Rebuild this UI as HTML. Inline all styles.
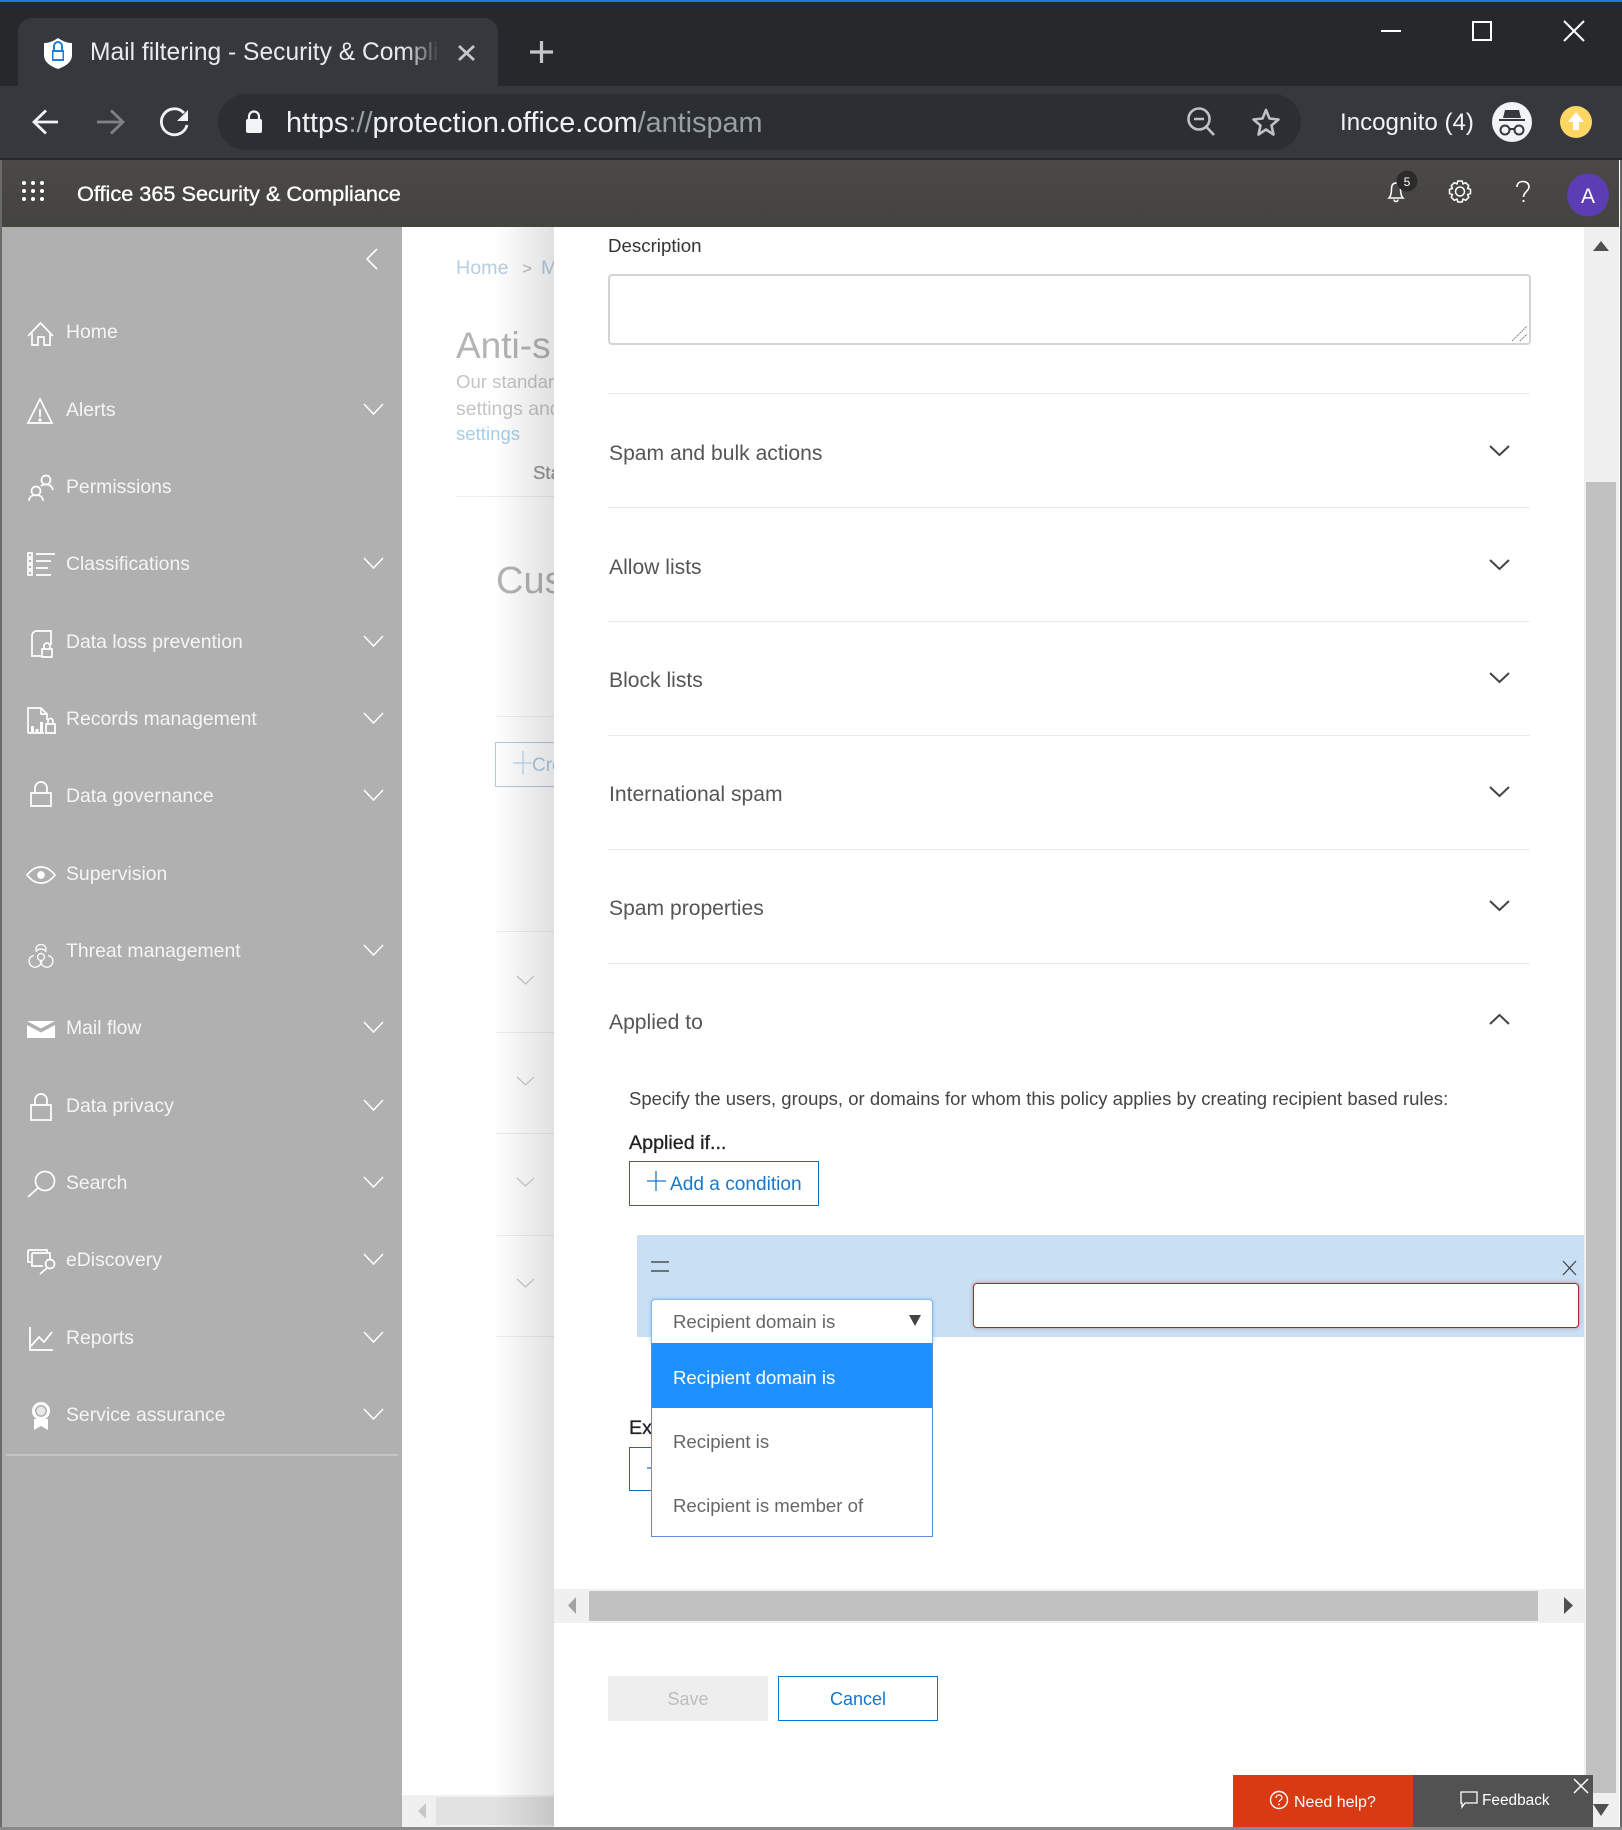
<!DOCTYPE html>
<html><head><meta charset="utf-8"><title>Mail filtering - Security &amp; Compliance</title>
<style>
html,body{margin:0;padding:0;width:1622px;height:1830px;overflow:hidden;background:#fff;font-family:"Liberation Sans",sans-serif}
div{position:absolute;box-sizing:border-box}
.t{position:absolute;white-space:nowrap;line-height:30px;height:30px}
.s{color:#f5f5f5;font-size:19.4px;left:66px}
.h{color:#555;font-size:21.1px;left:609px}
.l{left:608px;width:922px;height:1px;background:#ebebeb}
.b{left:496px;width:58px;height:1px;background:#ececec}
.o{color:#666;font-size:18.6px;left:673px}
</style></head><body>
<div style="left:0;top:0;width:1622px;height:1830px;overflow:hidden">
<!-- browser chrome -->
<div style="left:0;top:0;width:1622px;height:86px;background:#26282c"></div>
<div style="left:0;top:0;width:1622px;height:2px;background:#1d7ed0"></div>
<div style="left:18px;top:18px;width:480px;height:68px;background:#35393d;border-radius:14px 14px 0 0"></div>
<div class="t" style="left:90px;top:38px;width:350px;overflow:hidden;color:#e8eaed;font-size:24.6px;-webkit-mask-image:linear-gradient(90deg,#000 90%,transparent)">Mail filtering - Security &amp; Compliance</div>
<div style="left:0;top:86px;width:1622px;height:72px;background:#35393d"></div>
<div style="left:0;top:158px;width:1622px;height:2px;background:#26282c"></div>
<div style="left:218px;top:94px;width:1083px;height:56px;background:#2b2f33;border-radius:28px"></div>
<div class="t" style="left:286px;top:108px;font-size:28.8px;color:#f0f1f2"><span style="color:#f0f1f2">https</span><span style="color:#9aa0a6">://</span>protection.office.com<span style="color:#9aa0a6">/antispam</span></div>
<div class="t" style="left:1340px;top:108px;font-size:24.1px;color:#f1f3f4">Incognito (4)</div>
<!-- O365 header -->
<div style="left:0;top:160px;width:1622px;height:67px;background:linear-gradient(#4a4947,#444340)"></div>
<div class="t" style="left:77px;top:179px;font-size:21.7px;color:#fff;-webkit-text-stroke:.35px #fff">Office 365 Security &amp; Compliance</div>
<div class="t" style="left:1400px;top:167px;width:14px;text-align:center;font-size:12px;color:#fff;z-index:5">5</div>
<div class="t" style="left:1568px;top:182px;width:40px;text-align:center;font-size:21px;color:#fff;z-index:5">A</div>
<!-- sidebar -->
<div style="left:2px;top:227px;width:400px;height:1600px;background:#b0b0b0"></div>
<div style="left:6px;top:1454px;width:392px;height:2px;background:#c4c4c4"></div>
<div class="t s" style="top:317px">Home</div>
<div class="t s" style="top:395px">Alerts</div>
<div class="t s" style="top:472px">Permissions</div>
<div class="t s" style="top:549px">Classifications</div>
<div class="t s" style="top:627px">Data loss prevention</div>
<div class="t s" style="top:704px">Records management</div>
<div class="t s" style="top:781px">Data governance</div>
<div class="t s" style="top:859px">Supervision</div>
<div class="t s" style="top:936px">Threat management</div>
<div class="t s" style="top:1013px">Mail flow</div>
<div class="t s" style="top:1091px">Data privacy</div>
<div class="t s" style="top:1168px">Search</div>
<div class="t s" style="top:1245px">eDiscovery</div>
<div class="t s" style="top:1323px">Reports</div>
<div class="t s" style="top:1400px">Service assurance</div>
<!-- background page -->
<div style="left:402px;top:227px;width:152px;height:1600px;background:#fff"></div>
<div class="t" style="left:456px;top:253px;font-size:19.7px;color:#b9cde0">Home</div>
<div class="t" style="left:522px;top:254px;font-size:17px;color:#bbb">&gt;</div>
<div class="t" style="left:541px;top:253px;font-size:19.7px;color:#b9cde0">M</div>
<div class="t" style="left:456px;top:331px;font-size:37px;color:#b4b4b4">Anti-s</div>
<div class="t" style="left:456px;top:367px;font-size:18.6px;color:#c4c4c4">Our standard</div>
<div class="t" style="left:456px;top:394px;font-size:19.4px;color:#c4c4c4">settings and</div>
<div class="t" style="left:456px;top:419px;font-size:18.6px;color:#a5cfe9">settings</div>
<div class="t" style="left:533px;top:458px;font-size:18.6px;color:#999;-webkit-text-stroke:.3px #999">Sta</div>
<div class="b" style="left:456px;width:98px;top:496px"></div>
<div class="t" style="left:496px;top:566px;font-size:38px;color:#b4b4b4">Cus</div>
<div class="b" style="top:716px"></div>
<div style="left:495px;top:742px;width:70px;height:45px;border:1px solid #a9cbe8"></div>
<div class="t" style="left:532px;top:751px;font-size:19px;color:#a9cbe8">Cre</div>
<div class="b" style="top:931px"></div>
<div class="b" style="top:1032px"></div>
<div class="b" style="top:1133px"></div>
<div class="b" style="top:1235px"></div>
<div class="b" style="top:1336px"></div>
<div style="left:402px;top:1795px;width:152px;height:32px;background:#f0f0f0"></div>
<div style="left:436px;top:1797px;width:118px;height:28px;background:#e2e2e2"></div>
<div style="left:494px;top:227px;width:60px;height:1600px;background:linear-gradient(90deg,rgba(0,0,0,0),rgba(0,0,0,.12))"></div>
<!-- panel -->
<div style="left:554px;top:227px;width:1066px;height:1600px;background:#fff;overflow:hidden"></div>
<div class="t" style="left:608px;top:231px;font-size:18.7px;color:#333">Description</div>
<div style="left:608px;top:274px;width:923px;height:71px;border:2px solid #d4d4d4;border-radius:4px"></div>
<div class="l" style="top:393px"></div>
<div class="l" style="top:507px"></div>
<div class="l" style="top:621px"></div>
<div class="l" style="top:735px"></div>
<div class="l" style="top:849px"></div>
<div class="l" style="top:963px"></div>
<div class="t h" style="top:439px">Spam and bulk actions</div>
<div class="t h" style="top:553px">Allow lists</div>
<div class="t h" style="top:666px">Block lists</div>
<div class="t h" style="top:780px">International spam</div>
<div class="t h" style="top:894px">Spam properties</div>
<div class="t h" style="top:1008px">Applied to</div>
<div class="t" style="left:629px;top:1084px;font-size:18.53px;color:#444">Specify the users, groups, or domains for whom this policy applies by creating recipient based rules:</div>
<div class="t" style="left:629px;top:1128px;font-size:19.7px;color:#222;-webkit-text-stroke:.3px #222">Applied if...</div>
<div style="left:629px;top:1161px;width:190px;height:45px;border:1px solid #1a6cb8"></div>
<div class="t" style="left:670px;top:1170px;font-size:19.1px;color:#1a78cc">Add a condition</div>
<div style="left:637px;top:1235px;width:947px;height:102px;background:#c9e0f4"></div>
<div style="left:973px;top:1283px;width:606px;height:45px;background:#fff;border:1.5px solid #a4262c;border-radius:4px;box-shadow:0 0 4px rgba(164,38,44,.45)"></div>
<div class="t" style="left:629px;top:1413px;font-size:19.7px;color:#222;-webkit-text-stroke:.3px #222">Exc</div>
<div style="left:629px;top:1447px;width:40px;height:44px;border:1px solid #1a6cb8"></div>
<div style="left:651px;top:1299px;width:282px;height:45px;background:#fff;border:1px solid #8ab8e8;border-radius:4px 4px 0 0;box-shadow:0 0 4px rgba(100,170,240,.6)"></div>
<div class="t o" style="top:1307px">Recipient domain is</div>
<div style="left:651px;top:1343px;width:282px;height:194px;background:#fff;border:1px solid #5f8fd8"></div>
<div style="left:652px;top:1343px;width:280px;height:65px;background:#1e90ff"></div>
<div class="t o" style="top:1363px;color:#fff">Recipient domain is</div>
<div class="t o" style="top:1427px">Recipient is</div>
<div class="t o" style="top:1491px">Recipient is member of</div>
<!-- horizontal scrollbar -->
<div style="left:554px;top:1589px;width:1031px;height:34px;background:#f0f0f0"></div>
<div style="left:589px;top:1591px;width:949px;height:30px;background:#c1c1c1"></div>
<!-- buttons -->
<div style="left:608px;top:1676px;width:160px;height:45px;background:#eee"></div>
<div class="t" style="left:608px;top:1684px;width:160px;text-align:center;font-size:18px;color:#bdbdbd">Save</div>
<div style="left:778px;top:1676px;width:160px;height:45px;border:1.5px solid #0078d7"></div>
<div class="t" style="left:778px;top:1684px;width:160px;text-align:center;font-size:18px;color:#0f78d4">Cancel</div>
<!-- vertical scrollbar -->
<div style="left:1584px;top:227px;width:35px;height:1600px;background:#f0f0f0"></div>
<div style="left:1586px;top:482px;width:30px;height:1311px;background:#c1c1c1"></div>
<div style="left:1619px;top:160px;width:1px;height:1670px;background:#fff"></div>
<div style="left:1620px;top:160px;width:2px;height:1670px;background:#666"></div>
<div style="left:0;top:160px;width:2px;height:1670px;background:#6a6a6a"></div>
<div style="left:0;top:1827px;width:1622px;height:3px;background:#8a8a8a"></div>
<!-- help -->
<div style="left:1233px;top:1775px;width:180px;height:52px;background:#d83b13"></div>
<div class="t" style="left:1294px;top:1788px;font-size:16px;color:#fff">Need help?</div>
<div style="left:1413px;top:1775px;width:180px;height:52px;background:#525252"></div>
<div class="t" style="left:1482px;top:1786px;font-size:15.4px;color:#fff">Feedback</div>
<!-- icons overlay -->
<svg width="1622" height="1830" viewBox="0 0 1622 1830" style="position:absolute;left:0;top:0" fill="none">
<!-- favicon -->
<path d="M58 38C52 42 48 43 44 43V55C44 62 50 66 58 69C66 66 72 62 72 55V43C68 43 64 42 58 38Z" fill="#fff"/>
<path d="M52 50H64V61H52Z" fill="#1b7fd6"/><path d="M53.5 52H62.5V59H53.5Z" fill="#fff"/><path d="M54 50V46A4 4 0 0 1 62 46V50" stroke="#1b7fd6" stroke-width="2"/>
<!-- tab close/new -->
<path d="M459 46L474 60M474 46L459 60" stroke="#c4c7c9" stroke-width="2.800"/>
<path d="M541.5 41V63M530 52H553" stroke="#c4c7c9" stroke-width="3.2"/>
<!-- window -->
<path d="M1381 31H1401" stroke="#fff" stroke-width="2"/>
<rect x="1473" y="22" width="18" height="18" stroke="#fff" stroke-width="2"/>
<path d="M1564 21L1584 41M1584 21L1564 41" stroke="#fff" stroke-width="2"/>
<!-- nav -->
<path d="M58 122H35M46 110.500L34 122L46 133.500" stroke="#f1f3f4" stroke-width="2.800"/>
<path d="M97 122H122M111 110.500L123 122L111 133.500" stroke="#7e8286" stroke-width="2.800"/>
<path d="M184 113A13 13 0 1 0 187 125" stroke="#f1f3f4" stroke-width="2.800"/><path d="M188 110V121H177Z" fill="#f1f3f4"/>
<rect x="246" y="119" width="16" height="14" rx="2" fill="#f1f3f4"/><path d="M249 120V116.500A5 5 0 0 1 259 116.500V120" stroke="#f1f3f4" stroke-width="2.200"/>
<!-- zoom, star -->
<circle cx="1199" cy="119" r="10.500" stroke="#bdc1c6" stroke-width="2.600"/><path d="M1194 119H1204M1206.500 127L1214 135" stroke="#bdc1c6" stroke-width="2.600"/>
<path d="M1266 110L1269.500 118.500L1278.500 119.500L1271.500 125.500L1273.500 134.500L1266 129.500L1258.500 134.500L1260.500 125.500L1253.500 119.500L1262.500 118.500Z" stroke="#bdc1c6" stroke-width="2.600" stroke-linejoin="round"/>
<!-- incognito -->
<circle cx="1512" cy="122" r="20" fill="#f1f3f4"/>
<path d="M1499 119H1525V121H1499ZM1503 118L1505 110H1519L1521 118Z" fill="#35393d"/>
<circle cx="1505" cy="130" r="4.500" stroke="#35393d" stroke-width="2"/><circle cx="1519" cy="130" r="4.500" stroke="#35393d" stroke-width="2"/><path d="M1509.500 129H1514.500" stroke="#35393d" stroke-width="2"/>
<circle cx="1576" cy="122" r="16" fill="#fdd663"/><path d="M1576 112L1584 122H1579V130H1573V122H1568Z" fill="#fff"/>
<!-- header apps grid -->
<g fill="#fff"><circle cx="24" cy="183" r="2"/><circle cx="33" cy="183" r="2"/><circle cx="42" cy="183" r="2"/><circle cx="24" cy="191" r="2"/><circle cx="33" cy="191" r="2"/><circle cx="42" cy="191" r="2"/><circle cx="24" cy="199" r="2"/><circle cx="33" cy="199" r="2"/><circle cx="42" cy="199" r="2"/></g>
<!-- bell -->
<path d="M1389 198C1391 196 1391.500 193 1391.500 189C1391.500 185 1393 183 1396 183C1399 183 1400.500 185 1400.500 189C1400.500 193 1401 196 1403 198ZM1394 199.500A2 2 0 0 0 1398 199.500" stroke="#fff" stroke-width="1.500"/>
<circle cx="1407" cy="181" r="10.500" fill="#2b2b2b"/>
<!-- gear -->
<g transform="translate(1460 191.500)" stroke="#fff" stroke-width="1.500"><circle r="4.500"/><path d="M-2.200-10.500H2.200L3-7.500L5.700-8.800L8.800-5.700L7.500-3L10.500-2.200V2.200L7.500 3L8.800 5.700L5.700 8.800L3 7.500L2.200 10.500H-2.200L-3 7.500L-5.700 8.800L-8.800 5.700L-7.500 3L-10.500 2.200V-2.200L-7.500-3L-8.800-5.700L-5.700-8.800L-3-7.500Z" stroke-linejoin="round"/></g>
<!-- help -->
<path d="M1517 187C1517 183 1520 181.500 1523 181.500C1527 181.500 1529 184 1529 187C1529 191 1523.500 192 1523.500 197" stroke="#fff" stroke-width="1.600"/><circle cx="1523.500" cy="201" r="1.100" fill="#fff"/>
<ellipse cx="1588" cy="195" rx="21" ry="21.500" fill="#5c3db3"/>
<!-- sidebar collapse -->
<path d="M377 249L367 259L377 269" stroke="#fff" stroke-width="1.600"/>
<!-- sidebar chevrons -->
<g stroke="#fff" stroke-width="1.500"><path d="M364 404L373.500 414L383 404"/><path d="M364 558L373.500 568L383 558"/><path d="M364 636L373.500 646L383 636"/><path d="M364 713L373.500 723L383 713"/><path d="M364 790L373.500 800L383 790"/><path d="M364 945L373.500 955L383 945"/><path d="M364 1022L373.500 1032L383 1022"/><path d="M364 1100L373.500 1110L383 1100"/><path d="M364 1177L373.500 1187L383 1177"/><path d="M364 1254L373.500 1264L383 1254"/><path d="M364 1332L373.500 1342L383 1332"/><path d="M364 1409L373.500 1419L383 1409"/></g>
<!-- sidebar icons -->
<g stroke="#fff" stroke-width="1.700" fill="none">
<path d="M28 336L40.500 323L53 336M32 333V345H38V337H44V345H50V333"/>
<path d="M40 399L52 423H28ZM40 409V417"/><circle cx="40" cy="420" r=".8"/>
<circle cx="46" cy="480" r="4.500"/><circle cx="36" cy="491" r="4.500"/><path d="M29 501C29 497 32 495 36 495C40 495 43 497 43 501M41 486C42 485 44 484.500 46 484.500C49 484.500 52 486 53 490"/>
<path d="M28 553H32V557H28ZM28 559H32V563H28ZM28 565H32V569H28ZM28 571H32V575H28ZM36 554H55M36 561H51M36 568H48M36 575H51"/>
<path d="M51 645V631H37C34 631 32 633 32 636V656H41M42 649H52V657H42ZM44 649V646A3 3 0 0 1 50 646V649"/>
<path d="M28 733V708H41L47 714V720M28 733H44M41 708V714H47M46 724H55V733H46ZM48 724V721A2.500 2.500 0 0 1 53 721V724"/>
<path d="M31 793H51V806H31ZM35 793V788A6 6 0 0 1 47 788V793"/>
<path d="M27 875C32 869 36 867 41 867C46 867 50 869 55 875C50 881 46 883 41 883C36 883 32 881 27 875Z"/><circle cx="41" cy="875" r="3" fill="#fff"/>
<circle cx="41" cy="957" r="3.500" stroke-width="1.300"/><path d="M36.500 952C33 942 49 942 45.500 952M37 950.500C39 948.500 43 948.500 45 950.500M42 960C41 969 30 970 29 961C29 958 31 956 34 955.500M40 960C41 969 52 970 53 961C53 958 51 956 48 955.500" stroke-width="1.300"/>
<path d="M31 1105H51V1120H31ZM35 1105V1100A6 6 0 0 1 47 1100V1105"/>
<circle cx="45" cy="1181" r="9.500"/><path d="M38 1188L28 1197"/>
<path d="M28 1250H47V1252M32 1253H50V1259M32 1253V1266H43M28 1250V1262H31"/><circle cx="50" cy="1264" r="4.500"/><path d="M47 1268L40 1274"/>
<path d="M30 1327V1350H53M31 1346L39 1337L44 1342L52 1332" stroke-width="1.800"/>
</g>
<path d="M27 1021H55L41 1028.500ZM27 1025L41 1032.500L55 1025V1038H27Z" fill="#fff"/>
<path d="M31 733V726H34V733ZM35.500 733V729H38.500V733ZM40 733V722H43V733Z" fill="#fff"/>
<circle cx="41" cy="1411" r="9" fill="#fff"/><circle cx="41" cy="1411" r="5.200" fill="#e9e9e9" stroke="#a8a8a8" stroke-width="1.300"/><path d="M34 1419V1430L41 1426L48 1430V1419Z" fill="#fff"/>
<!-- bg chevrons -->
<g stroke="#c0c0c0" stroke-width="1.300"><path d="M517 976L525.500 984L534 976"/><path d="M517 1077L525.500 1085L534 1077"/><path d="M517 1178L525.500 1186L534 1178"/><path d="M517 1279L525.500 1287L534 1279"/></g>
<path d="M523 751V775M513 763H532" stroke="#a9cbe8" stroke-width="1.200"/>
<path d="M418 1811L426 1803V1819Z" fill="#c8c8c8"/>
<!-- textarea grip -->
<path d="M1512 341L1527 326M1520 341L1527 334" stroke="#777" stroke-width="1" stroke-dasharray="1.500 .8"/>
<!-- panel chevrons -->
<g stroke="#444" stroke-width="2"><path d="M1490 446L1499.500 455L1509 446"/><path d="M1490 560L1499.500 569L1509 560"/><path d="M1490 673L1499.500 682L1509 673"/><path d="M1490 787L1499.500 796L1509 787"/><path d="M1490 901L1499.500 910L1509 901"/><path d="M1490 1024L1499.500 1015L1509 1024"/></g>
<!-- add plus -->
<path d="M656 1171V1191M647 1181H666" stroke="#1a78cc" stroke-width="1.300"/>
<path d="M647 1468H651" stroke="#1a78cc" stroke-width="1.300"/>
<!-- rule handle -->
<path d="M651 1262H669M651 1271H669" stroke="#333" stroke-width="1.300"/>
<path d="M1563 1261L1576 1275M1576 1261L1563 1275" stroke="#444" stroke-width="1.200"/>
<path d="M909 1315H921L915 1326Z" fill="#444"/>
<!-- scrollbar arrows -->
<path d="M1593 251L1601 241L1609 251Z" fill="#505050"/>
<path d="M1593 1804L1609 1804L1601 1816Z" fill="#505050"/>
<path d="M576 1597V1614L568 1605.500Z" fill="#a3a3a3"/>
<path d="M1564 1597V1614L1573 1605.500Z" fill="#505050"/>
<!-- help icons -->
<circle cx="1279" cy="1800" r="8.500" stroke="#fff" stroke-width="1.400"/>
<path d="M1276 1798C1276 1794 1282 1794 1282 1798C1282 1800 1279 1800 1279 1802" stroke="#fff" stroke-width="1.200"/><circle cx="1279" cy="1804.500" r=".9" fill="#fff"/>
<path d="M1461 1792H1477V1803H1465L1462 1807V1803H1461Z" stroke="#fff" stroke-width="1.300"/>
<path d="M1574 1779L1588 1793M1588 1779L1574 1793" stroke="#fff" stroke-width="1.500"/>
</svg>
</div>
</body></html>
